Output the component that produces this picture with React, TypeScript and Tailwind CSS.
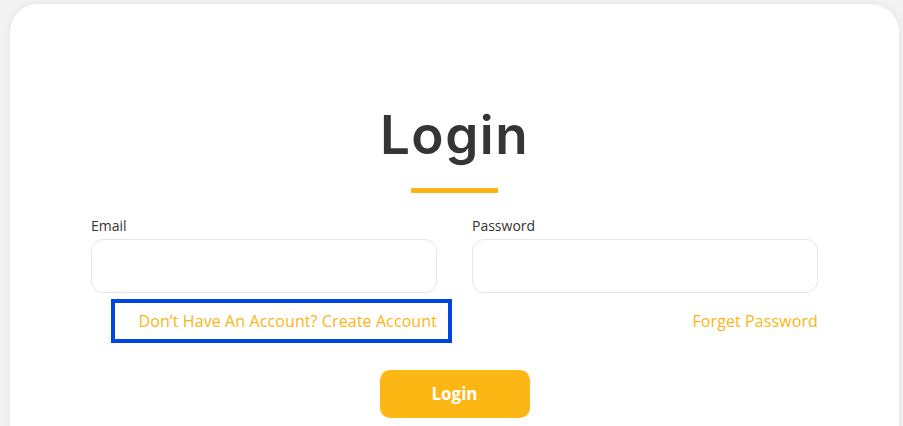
export default function App() {
  return (
    <div className="h-[426px] overflow-hidden bg-[#f3f3f3] pl-[10px] pr-[4px] pt-[4px] font-['Open_Sans',sans-serif]">
      <div className="h-[460px] rounded-[28px] bg-white px-[81px] pt-[99px] shadow-[0_0_10px_rgba(0,0,0,0.07)]">
        <h1 className="text-center font-['Inter',sans-serif] text-[53px] font-semibold leading-[64px] tracking-[1.5px] text-[#353535]">Login</h1>
        <div className="mx-auto mt-[21px] h-[5px] w-[87px] bg-[#fcb415]" />

        <div className="mt-[23px] grid grid-cols-2 gap-x-[35px]">
          <div className="flex flex-col">
            <label className="text-[14px] leading-[20px] text-[#333]">Email</label>
            <input type="email" className="mt-[3px] h-[54px] rounded-[12px] border border-[#e6e6e6] bg-white px-4 outline-none" />
          </div>
          <div className="flex flex-col">
            <label className="text-[14px] leading-[20px] text-[#333]">Password</label>
            <input type="password" className="mt-[3px] h-[54px] rounded-[12px] border border-[#e6e6e6] bg-white px-4 outline-none" />
          </div>

          <div className="mt-[6px] flex justify-end">
            <a href="#" className="-mr-[15px] border-4 border-[#0045e0] py-[6px] pl-[24px] pr-[11px] text-[16px] leading-[24px] tracking-[0.1px] text-[#fcb415]">
              Don’t Have An Account? Create Account
            </a>
          </div>
          <div className="mt-[6px] flex items-center justify-end">
            <a href="#" className="text-[16px] leading-[24px] tracking-[0.1px] text-[#fcb415]">Forget Password</a>
          </div>
        </div>

        <div className="mt-[27px] flex justify-center">
          <button className="h-[48px] w-[150px] rounded-[10px] bg-[#fdb714] text-[17px] font-bold text-white">Login</button>
        </div>
      </div>
    </div>
  );
}
